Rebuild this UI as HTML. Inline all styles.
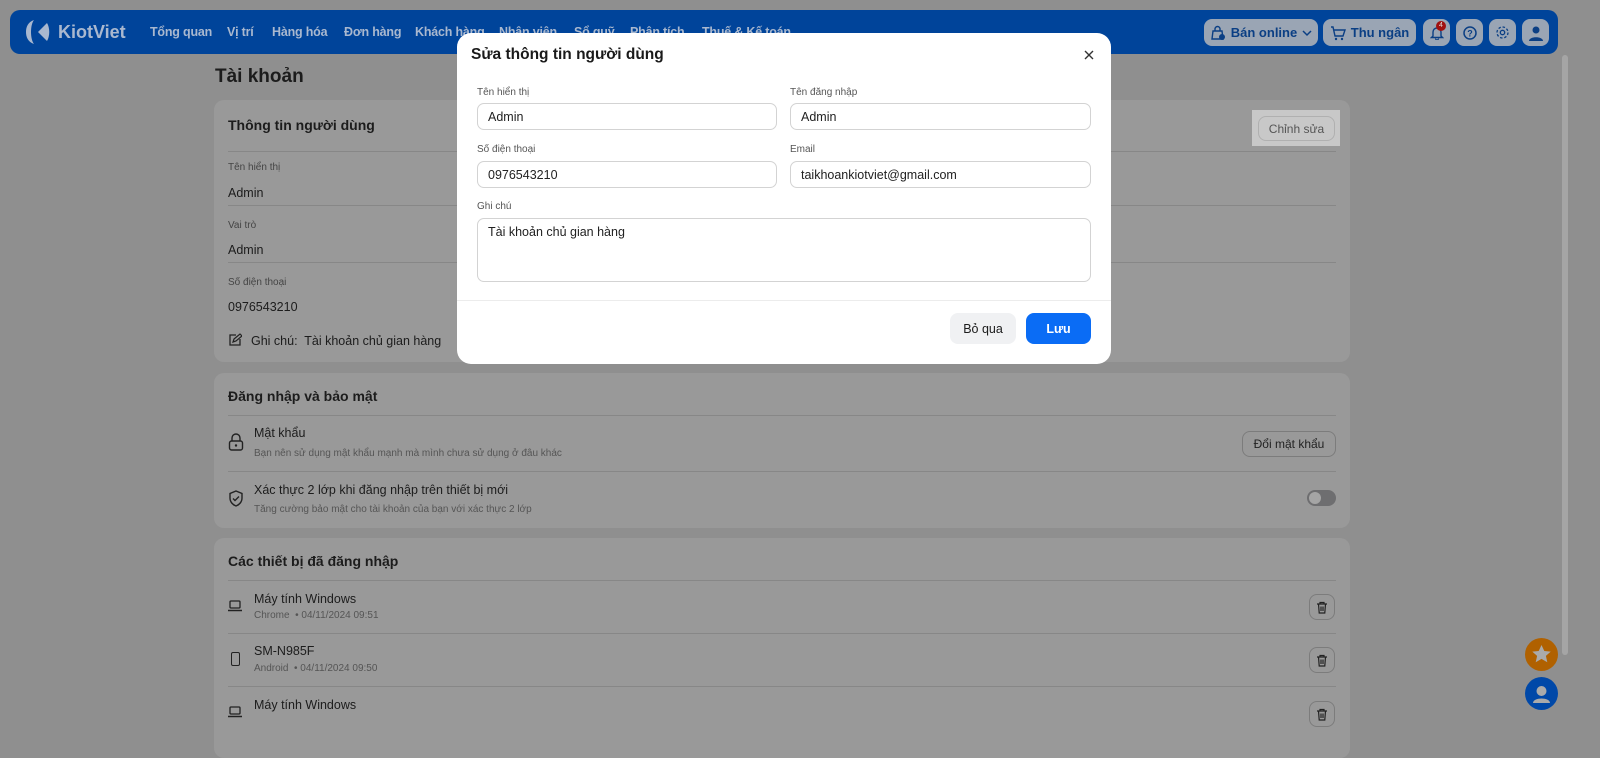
<!DOCTYPE html>
<html><head><meta charset="utf-8"><style>
*{box-sizing:border-box;margin:0;padding:0}
body{width:1600px;height:735px;overflow:hidden;background:#8f8f8f;font-family:"Liberation Sans",Arial,sans-serif;position:relative;color:#1c1c1c}
.nav{position:absolute;left:10px;top:10px;width:1548px;height:44px;background:#00449a;border-radius:10px}
.nav .logo{position:absolute;left:14px;top:9px;display:flex;align-items:center;gap:6px;color:#a9b8cf;font-weight:bold;font-size:18px}
.nav .m{position:absolute;top:15px;color:#a9b8cf;font-size:12.5px;font-weight:bold;letter-spacing:-0.2px}
.nb{position:absolute;top:9px;height:27px;background:#9aa5b4;border-radius:8px;color:#0b3f84;font-size:13px;font-weight:bold;display:flex;align-items:center;justify-content:center;gap:5px}
.title{position:absolute;left:215px;top:66px;font-size:19px;font-weight:bold}
.card{position:absolute;left:214px;width:1136px;background:#999;border-radius:10px}
.hd{position:absolute;left:14px;font-size:14px;font-weight:bold}
.ln{position:absolute;left:14px;right:14px;height:1px;background:#878787}
.lb{position:absolute;left:14px;font-size:10px;color:#444}
.v{position:absolute;left:14px;font-size:12.5px}
.t{position:absolute;font-size:12.5px}
.s{position:absolute;font-size:10px;color:#555}
.btn{position:absolute;border:1px solid #7c7c7c;border-radius:8px;font-size:12px;display:flex;align-items:center;justify-content:center;color:#222}
.modal{position:absolute;left:457px;top:33px;width:654px;height:331px;background:#fff;border-radius:14px}
.modal .ml{position:absolute;font-size:10px;color:#555}
.modal .in{position:absolute;height:27px;border:1px solid #d3d3d3;border-radius:7px;font-size:12.5px;padding:6px 10px;color:#222}
</style></head><body>
<div style="position:absolute;left:1562px;top:55px;width:6px;height:600px;background:#a5a5a5;border-radius:3px"></div>
<div class="nav">
 <div class="logo"><svg width="28" height="26" viewBox="0 0 28 26"><path d="M10 1C4 3 2 8 2 13s2 10 8 12C6 20 6 6 10 1z" fill="#a9b8cf"/><path d="M14 13l9-9c3 5 3 13 0 18z" fill="#a9b8cf"/></svg>KiotViet</div>
 <span class="m" style="left:140px">Tổng quan</span><span class="m" style="left:217px">Vị trí</span><span class="m" style="left:262px">Hàng hóa</span><span class="m" style="left:334px">Đơn hàng</span><span class="m" style="left:405px">Khách hàng</span><span class="m" style="left:489px">Nhân viên</span><span class="m" style="left:564px">Sổ quỹ</span><span class="m" style="left:620px">Phân tích</span><span class="m" style="left:692px">Thuế &amp; Kế toán</span>
 <div class="nb" style="left:1194px;width:114px"><svg width="16" height="16"><path d="M3 6h9l1 8H2z" fill="none" stroke="#0b3f84" stroke-width="1.4"/><path d="M5 6V4a2.5 2.5 0 0 1 5 0v2" fill="none" stroke="#0b3f84" stroke-width="1.4"/><circle cx="12" cy="12" r="3" fill="#0b3f84"/></svg>Bán online <svg width="10" height="8"><path d="M1 2l4 4 4-4" fill="none" stroke="#0b3f84" stroke-width="1.5"/></svg></div>
 <div class="nb" style="left:1313px;width:93px"><svg width="16" height="16"><path d="M1 2h2l2 9h8l2-6H4" fill="none" stroke="#0b3f84" stroke-width="1.4"/><circle cx="6" cy="14" r="1.2" fill="#0b3f84"/><circle cx="12" cy="14" r="1.2" fill="#0b3f84"/></svg>Thu ngân</div>
 <div class="nb" style="left:1413px;width:27px"><svg width="14" height="15"><path d="M3 11V7a4 4 0 0 1 8 0v4l1.5 1.5h-11z" fill="none" stroke="#0b3f84" stroke-width="1.4"/><path d="M5.5 13.5a1.5 1.5 0 0 0 3 0" fill="none" stroke="#0b3f84" stroke-width="1.2"/></svg></div>
 <div style="position:absolute;left:1426px;top:11px;width:10px;height:10px;border-radius:5px;background:#a01010;color:#ddd;font-size:7px;text-align:center;line-height:10px">4</div>
 <div class="nb" style="left:1446px;width:27px"><svg width="14" height="14"><circle cx="7" cy="7" r="6" fill="none" stroke="#0b3f84" stroke-width="1.5"/><text x="7" y="10.5" font-size="9" text-anchor="middle" fill="#0b3f84">?</text></svg></div>
 <div class="nb" style="left:1479px;width:27px"><svg width="15" height="15"><circle cx="7.5" cy="7.5" r="2.2" fill="none" stroke="#0b3f84" stroke-width="1.3"/><circle cx="7.5" cy="7.5" r="5.5" fill="none" stroke="#0b3f84" stroke-width="1.3" stroke-dasharray="2.5 1.8"/></svg></div>
 <div class="nb" style="left:1512px;width:27px"><svg width="16" height="16"><circle cx="8" cy="5" r="3.5" fill="#0b3f84"/><path d="M1 16c0-5 14-5 14 0z" fill="#0b3f84"/></svg></div>
</div>
<div class="title">Tài khoản</div>
<div class="card" style="top:100px;height:262px">
 <div class="hd" style="top:17px">Thông tin người dùng</div>
 <div style="position:absolute;left:1038px;top:10px;width:88px;height:36px;background:#c8c8c8"></div>
 <div class="btn" style="left:1044px;top:16px;width:77px;height:25px;border-color:#b0b0b0;background:#c8c8c8;color:#555">Chỉnh sửa</div>
 <div class="ln" style="top:51px"></div>
 <div class="lb" style="top:62px">Tên hiển thị</div><div class="v" style="top:86px">Admin</div><div class="ln" style="top:105px"></div>
 <div class="lb" style="top:120px">Vai trò</div><div class="v" style="top:143px">Admin</div><div class="ln" style="top:162px"></div>
 <div class="lb" style="top:177px">Số điện thoại</div><div class="v" style="top:200px">0976543210</div>
 <svg style="position:absolute;left:14px;top:233px" width="14" height="14"><path d="M8 2H2v10h10V6" fill="none" stroke="#222" stroke-width="1.3"/><path d="M5 9l1-3 6-5 2 2-6 5z" fill="none" stroke="#222" stroke-width="1.2"/></svg>
 <div class="v" style="left:37px;top:234px">Ghi chú:&nbsp; Tài khoản chủ gian hàng</div>
</div>
<div class="card" style="top:373px;height:155px">
 <div class="hd" style="top:15px">Đăng nhập và bảo mật</div>
 <div class="ln" style="top:42px"></div>
 <svg style="position:absolute;left:14px;top:60px" width="16" height="18"><path d="M4 8V5a4 4 0 0 1 8 0v3" fill="none" stroke="#222" stroke-width="1.4"/><rect x="1.5" y="8" width="13" height="9" rx="2" fill="none" stroke="#222" stroke-width="1.4"/><circle cx="8" cy="12.5" r="1.2" fill="#222"/></svg>
 <div class="t" style="left:40px;top:53px">Mật khẩu</div>
 <div class="s" style="left:40px;top:75px">Bạn nên sử dụng mật khẩu mạnh mà mình chưa sử dụng ở đâu khác</div>
 <div class="btn" style="left:1028px;top:58px;width:94px;height:26px">Đổi mật khẩu</div>
 <div class="ln" style="top:98px"></div>
 <svg style="position:absolute;left:14px;top:117px" width="16" height="17"><path d="M8 1l6 2.5v4.5c0 4-3 7-6 8-3-1-6-4-6-8V3.5z" fill="none" stroke="#222" stroke-width="1.4"/><path d="M5 8.5l2 2 4-4" fill="none" stroke="#222" stroke-width="1.4"/></svg>
 <div class="t" style="left:40px;top:110px">Xác thực 2 lớp khi đăng nhập trên thiết bị mới</div>
 <div class="s" style="left:40px;top:131px">Tăng cường bảo mật cho tài khoản của bạn với xác thực 2 lớp</div>
 <div style="position:absolute;left:1093px;top:117px;width:29px;height:16px;border-radius:8px;background:#6e6e70"><div style="position:absolute;left:2px;top:2px;width:12px;height:12px;border-radius:6px;background:#a5a5a5"></div></div>
</div>
<div class="card" style="top:538px;height:220px">
 <div class="hd" style="top:15px">Các thiết bị đã đăng nhập</div>
 <div class="ln" style="top:42px"></div>
 <svg style="position:absolute;left:14px;top:62px" width="14" height="12"><rect x="2" y="1" width="10" height="7" rx="1" fill="none" stroke="#222" stroke-width="1.3"/><path d="M0 10.5h14" stroke="#222" stroke-width="1.5"/></svg>
 <div class="t" style="left:40px;top:54px">Máy tính Windows</div><div class="s" style="left:40px;top:72px">Chrome &nbsp;• 04/11/2024 09:51</div>
 <div class="btn" style="left:1095px;top:56px;width:26px;height:26px"><svg width="12" height="13"><path d="M1 3h10M4 3V1.5h4V3M2.5 3l.7 9h5.6l.7-9M5 5.5v4.5M7 5.5v4.5" fill="none" stroke="#222" stroke-width="1.2"/></svg></div>
 <div class="ln" style="top:95px"></div>
 <div class="t" style="left:40px;top:106px">SM-N985F</div><div class="s" style="left:40px;top:125px">Android &nbsp;• 04/11/2024 09:50</div>
 <div style="position:absolute;left:17px;top:114px;width:9px;height:14px;border:1.4px solid #222;border-radius:2px"></div>
 <div class="btn" style="left:1095px;top:109px;width:26px;height:26px"><svg width="12" height="13"><path d="M1 3h10M4 3V1.5h4V3M2.5 3l.7 9h5.6l.7-9M5 5.5v4.5M7 5.5v4.5" fill="none" stroke="#222" stroke-width="1.2"/></svg></div>
 <div class="ln" style="top:148px"></div>
 <svg style="position:absolute;left:14px;top:168px" width="14" height="12"><rect x="2" y="1" width="10" height="7" rx="1" fill="none" stroke="#222" stroke-width="1.3"/><path d="M0 10.5h14" stroke="#222" stroke-width="1.5"/></svg>
 <div class="t" style="left:40px;top:160px">Máy tính Windows</div>
 <div class="btn" style="left:1095px;top:163px;width:26px;height:26px"><svg width="12" height="13"><path d="M1 3h10M4 3V1.5h4V3M2.5 3l.7 9h5.6l.7-9M5 5.5v4.5M7 5.5v4.5" fill="none" stroke="#222" stroke-width="1.2"/></svg></div>
</div>
<div style="position:absolute;left:1525px;top:638px;width:33px;height:33px;border-radius:50%;background:#b06100"><svg width="33" height="33"><path d="M16.5 7l2.8 6 6.4.6-4.8 4.3 1.4 6.4-5.8-3.4-5.8 3.4 1.4-6.4-4.8-4.3 6.4-.6z" fill="#aaa"/></svg></div>
<div style="position:absolute;left:1525px;top:677px;width:33px;height:33px;border-radius:50%;background:#0048a8"><svg width="33" height="33"><circle cx="16.5" cy="14" r="5" fill="#aaa"/><path d="M8 26c0-6 17-6 17 0z" fill="#aaa"/></svg></div>
<div class="modal">
 <div style="position:absolute;left:14px;top:13px;font-size:15.5px;font-weight:bold;color:#1a1a1a">Sửa thông tin người dùng</div>
 <svg style="position:absolute;left:627px;top:17px" width="10" height="10"><path d="M1 1l8 8M9 1l-8 8" stroke="#333" stroke-width="1.4"/></svg>
 <div class="ml" style="left:20px;top:54px">Tên hiển thị</div><div class="ml" style="left:333px;top:54px">Tên đăng nhập</div>
 <div class="in" style="left:20px;top:70px;width:300px">Admin</div><div class="in" style="left:333px;top:70px;width:301px">Admin</div>
 <div class="ml" style="left:20px;top:111px">Số điện thoại</div><div class="ml" style="left:333px;top:111px">Email</div>
 <div class="in" style="left:20px;top:128px;width:300px">0976543210</div><div class="in" style="left:333px;top:128px;width:301px">taikhoankiotviet@gmail.com</div>
 <div class="ml" style="left:20px;top:168px">Ghi chú</div>
 <div class="in" style="left:20px;top:185px;width:614px;height:64px">Tài khoản chủ gian hàng</div>
 <div style="position:absolute;left:0;right:0;top:267px;height:1px;background:#ececec"></div>
 <div style="position:absolute;left:493px;top:280px;width:66px;height:31px;border-radius:8px;background:#f0f1f3;font-size:12.5px;display:flex;align-items:center;justify-content:center">Bỏ qua</div>
 <div style="position:absolute;left:569px;top:280px;width:65px;height:31px;border-radius:8px;background:#0a6cf5;color:#fff;font-weight:bold;font-size:12.5px;display:flex;align-items:center;justify-content:center">Lưu</div>
</div>
</body></html>
